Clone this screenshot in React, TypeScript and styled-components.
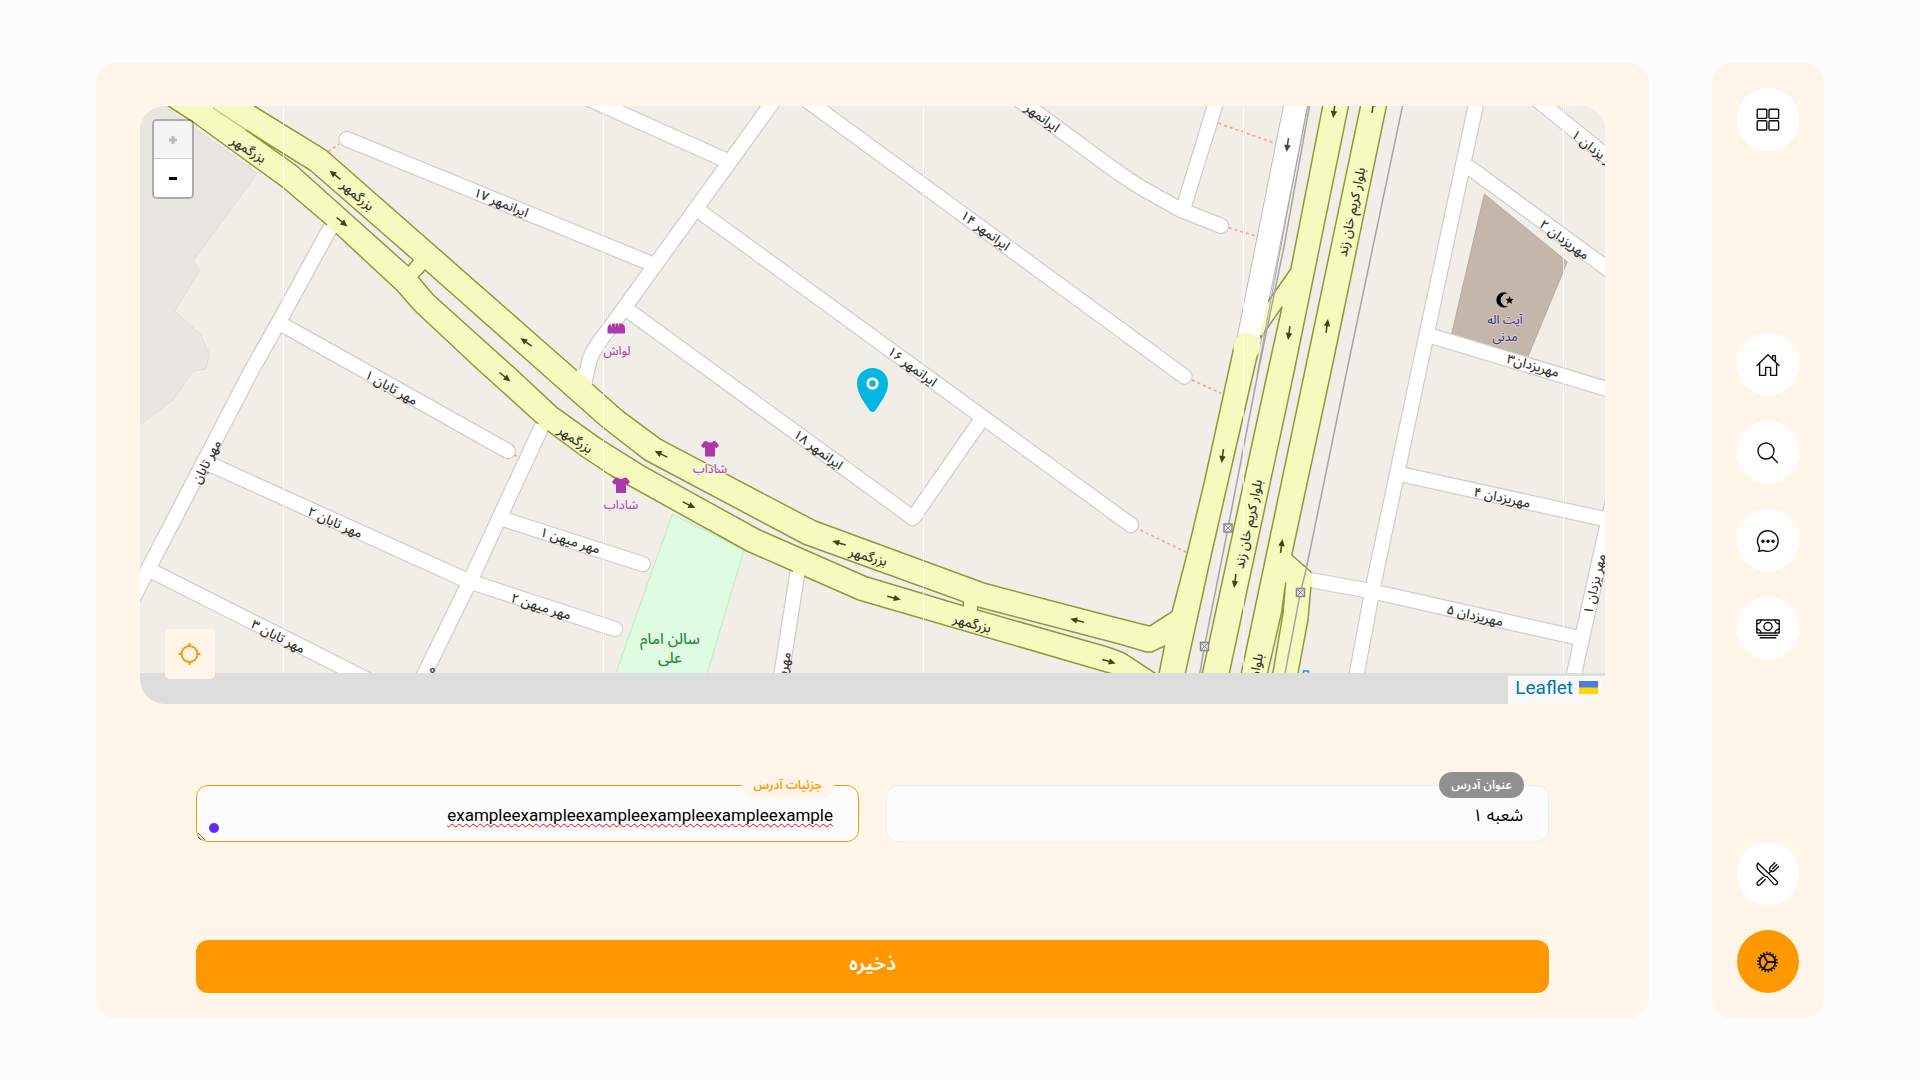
import React from "react";
import styled, { createGlobalStyle } from "styled-components";

const FONT = 'Roboto, "Noto Sans Arabic", "Noto Sans", "DejaVu Sans", sans-serif';
const MAP_FONT = '"Noto Sans Arabic", "Noto Sans", "DejaVu Sans", sans-serif';
const CREAM = "#fff5e8";
const ORANGE = "#ff9800";

const GlobalStyle = createGlobalStyle`
  * { box-sizing: border-box; }
  body { margin: 0; background: #fcfcfc; font-family: ${FONT}; color: #000; }
  button, input, textarea { font-family: inherit; }
`;

const Page = styled.div`
  direction: rtl;
  display: flex;
  gap: 63px;
  min-height: 100vh;
  padding: 63px 5% 62px;
`;

const Sidebar = styled.nav`
  flex: none;
  display: flex;
  flex-direction: column;
  justify-content: space-between;
  padding: 25px;
  border-radius: 20px;
  background: ${CREAM};
`;

const NavGroup = styled.div`
  display: flex;
  flex-direction: column;
  gap: 25px;
`;

const NavLink = styled.a<{ $active?: boolean }>`
  display: flex;
  align-items: center;
  justify-content: center;
  width: 62px;
  height: 63px;
  border-radius: 50%;
  color: #111;
  background: ${(p) => (p.$active ? ORANGE : "#fff")};
`;

const Panel = styled.main`
  flex: 1;
  min-width: 0;
  display: flex;
  flex-direction: column;
  padding: 43px 44px 25px;
  border-radius: 20px;
  background: ${CREAM};
`;

const MapBox = styled.section`
  position: relative;
  direction: ltr;
  flex: 1;
  overflow: hidden;
  border-radius: 25px;
  background: #ddd;
`;

const MapSvg = styled.svg`
  display: block;
  width: 100%;
  height: auto;
`;

const ZoomControl = styled.div`
  position: absolute;
  top: 13px;
  left: 12px;
  display: flex;
  flex-direction: column;
  width: 42px;
  border: 2px solid rgba(0, 0, 0, 0.25);
  border-radius: 5px;
  background-clip: padding-box;
  overflow: hidden;
`;

const ZoomButton = styled.button`
  height: 38px;
  padding: 0;
  border: 0;
  background: #fff;
  color: #000;
  &:disabled {
    background: #f4f4f4;
    color: #bbb;
    box-shadow: inset 0 -1px #ccc;
  }
`;

const ZoomGlyph = styled.svg`
  display: block;
  margin: auto;
`;

const LocateButton = styled.button`
  position: absolute;
  left: 25px;
  bottom: 25px;
  display: flex;
  align-items: center;
  justify-content: center;
  width: 50px;
  height: 50px;
  padding: 0;
  border: 0;
  border-radius: 5px;
  background: ${CREAM};
  color: ${ORANGE};
`;

const Attribution = styled.div`
  position: absolute;
  right: 0;
  bottom: 0;
  display: flex;
  padding: 0 7px;
  height: 28px;
  background: rgba(255, 255, 255, 0.8);
  font-size: 19px;
  line-height: 24px;
`;

const AttributionLink = styled.a`
  display: flex;
  flex-direction: row;
  gap: 6px;
  color: #0078a8;
  text-decoration: none;
`;

const Flag = styled.svg`
  margin-top: 5px;
`;

const Form = styled.form`
  display: flex;
  flex-direction: column;
  gap: 98px;
  padding: 81px 56px 0;
`;

const Fields = styled.div`
  display: grid;
  grid-template-columns: 1fr 1fr;
  gap: 27px;
`;

const Field = styled.div`
  position: relative;
  display: flex;
  height: 57px;
`;

const FieldLabel = styled.label<{ $focused?: boolean }>`
  position: absolute;
  top: -13px;
  right: 25px;
  padding: 0 12px;
  border-radius: 14px;
  background: ${(p) => (p.$focused ? CREAM : "#909090")};
  color: ${(p) => (p.$focused ? ORANGE : "#fff")};
  font-size: 12px;
  font-weight: 600;
  line-height: 26px;
`;

const TextInput = styled.input`
  width: 100%;
  padding: 4px 25px 0;
  border: 1px solid #eee;
  border-radius: 12px;
  outline: 0;
  background: #fcfcfc;
  font-size: 17px;
`;

const TextArea = styled.textarea`
  width: 100%;
  height: 57px;
  padding: 17px 25px 0;
  border: 1px solid ${ORANGE};
  border-radius: 12px;
  outline: 0;
  background: #fcfcfc;
  font-size: 17px;
  line-height: 24px;
  text-decoration: underline wavy #f00 1px;
  text-underline-offset: 2px;
  text-decoration-skip-ink: none;
  resize: vertical;
`;

const Dot = styled.span`
  position: absolute;
  left: 13px;
  bottom: 9px;
  width: 10px;
  height: 10px;
  border-radius: 50%;
  background: #6029ff;
`;

const SaveButton = styled.button`
  height: 53px;
  padding: 0 0 5px;
  border: 0;
  border-radius: 12px;
  background: ${ORANGE};
  color: #fff;
  font-size: 20px;
  font-weight: 600;
`;

/* ---------- icons ---------- */

const Icon = ({ children, width = 1.4 }: { children: React.ReactNode; width?: number }) => (
  <svg width="24" height="24" viewBox="0 0 24 24" fill="none" stroke="currentColor"
    strokeWidth={width} strokeLinecap="round" strokeLinejoin="round" aria-hidden="true">
    {children}
  </svg>
);

const GridIcon = () => (
  <Icon>
    <rect x="1.2" y="1.2" width="9.6" height="9.2" rx="1" />
    <rect x="13" y="1.2" width="9.6" height="9.2" rx="1" />
    <rect x="1.2" y="12.8" width="9.6" height="9.2" rx="1" />
    <rect x="13" y="12.8" width="9.6" height="9.2" rx="1" />
  </Icon>
);

const HomeIcon = () => (
  <Icon>
    <path d="M1 12.6 12 1.8l11 10.8M3.6 10.4v12h6v-8h5v8h6v-12M16.6 6V2.6h2.8v6" />
  </Icon>
);

const SearchIcon = () => (
  <Icon>
    <circle cx="10" cy="10" r="8" />
    <path d="m15.800 15.800 5.700 5.600" />
  </Icon>
);

const ChatIcon = () => (
  <Icon>
    <path d="M2.5 22.3c1.4-1.6 1.2-3.4.4-5.1A10.3 10.3 0 1 1 8 21.6c-1.7-.3-3.6.2-5.5.7Z" />
    <g fill="currentColor" stroke="none">
      <circle cx="7" cy="12.3" r="1.7" />
      <circle cx="12" cy="12.3" r="1.7" />
      <circle cx="17" cy="12.3" r="1.7" />
    </g>
  </Icon>
);

const MoneyIcon = () => (
  <Icon>
    <rect x=".8" y="3" width="22.4" height="13" rx=".5" />
    <circle cx="12" cy="9.5" r="4" />
    <path d="M5 3c0 2.2-2 3.8-4.2 3.8M19 3c0 2.2 2 3.8 4.2 3.8M5 16c0-2.2-2-3.8-4.2-3.8M19 16c0-2.2 2-3.8 4.2-3.8M2.4 18.4h19.2M4.2 20.8h15.6" />
  </Icon>
);

const UtensilsIcon = () => (
  <Icon>
    <path d="M1.800 1C.4 3.500 1 6.600 3.300 8.800l5.600 5.200c.8.700 1.700.2 2.400.9l6.200 7c1.200 1.300 2.700.9 3.400.200s.9-2.100-.2-3.200Z" />
    <path d="M7 15.200 1.800 19.800c-1.200 1-.9 2.200-.3 2.900s1.800.9 2.700-.2l5-5.100M13.600 10.400l2-2" />
    <path d="M18.800.8l-4 4c-1.300 1.400-1.400 3.300-.5 4.200s2.900.8 4.200-.5l4-4M20.800 2.500l-4.200 4.200" />
  </Icon>
);

const GearIcon = () => (
  <Icon width={1.8}>
    <circle cx="11.500" cy="12" r="7.800" />
    <circle cx="11.500" cy="12" r="9.400" strokeDasharray="1.400 1.881" strokeWidth="2" strokeLinecap="butt" />
    <path d="M11.500 12h7.800M11.500 12 7.500 5.300M11.500 12l-4 6.700" />
  </Icon>
);

const LocateIcon = () => (
  <Icon width={2}>
    <circle cx="11.500" cy="12" r="8" />
    <path d="M11.500 1.800V4M11.500 20v2.200M1.300 12H3.500M19.500 12h2.200" />
  </Icon>
);

/* ---------- map data ---------- */

const STREETS = [
  "M346.700 139 652 264",
  "M560 86 723 159",
  "M778 95 609 329Q592 350 589 362L584 385",
  "M702 213 1131 525",
  "M631 312.500 913 518 981 420",
  "M790 88 1184.500 376.500",
  "M1003 88 1120 174 1140 187 1181 210 1221 225.700",
  "M1184 206 1218 96",
  "M330 228.500 281 318 251.700 370 130 604",
  "M283 325 507.700 451",
  "M211.700 465 468 581 615 629",
  "M153 571.700 374 683",
  "M541.700 426.700 471 579 420 683",
  "M503 519 642.700 564",
  "M797.700 571 780 683",
  "M1478 95 1419 370 1373.400 585 1355 683",
  "M1470 168 1620 278",
  "M1530 94 1620 167",
  "M1433.700 336.700 1620 393",
  "M1404.400 475 1604 519",
  "M1310 580 1373 591.500 1575 637",
  "M1572 683 1608 522 1622 462",
];

const MAIN_ROAD =
  "M150 94 168.300 106 193 122 283.300 187.700 325 223.300 396.700 290 415 310.700 478.300 370 536.700 422.700 580 455 610 475 746.700 551 791.700 570.700 858.300 600 1147 684" +
  "L1183 684 1212 552 1228.500 480 1254 370 1259 349A12.500 12.500 0 0 0 1234.500 344L1204.700 480 1187.500 552 1172 611.700 1149.600 626 1110 616 985 583.300 815 520.700 660.700 439.300 623.300 411.700 578.300 371.700 326.700 150.700 235 94Z";

const MEDIANS = [
  "M246 130 263 141 310 170 413.300 260 408.300 266 296.700 166Z",
  "M425 270 538 370 600 425 645 460 803.300 544 963.300 601.700V605.700L866.700 576.700 760 530 645 466.700 600 438.300 556.700 407.300 516.700 370 433.300 295 418.300 277.300Z",
  "M977.700 607 1120 644.300 1146 652 1152 652 1164.400 646 1157 684H1147L1154.800 673 1123.800 652.700 1108 647 977.700 610Z",
];

const PATHS = [
  "M328.300 151.700 339.300 144",
  "M1218.500 123.300 1275.300 143.300",
  "M1228.800 227.700 1258 236.700",
  "M1192 380 1221 393.300",
  "M1140.300 530 1186.400 552.300",
  "M514 455 520 457.700",
];

const JUNCTIONS = [
  "M327 225 336 233",
  "M538 424 547 431",
  "M577 370.500 592 384",
  "M793 571 804 576",
];

/* x, y, angle, text */
const STREET_NAMES: [number, number, number, string][] = [
  [248, 150, 32, "بزرگمهر"],
  [357, 196, 40, "بزرگمهر"],
  [575, 440, 34, "بزرگمهر"],
  [868, 557, 16, "بزرگمهر"],
  [972, 624, 15, "بزرگمهر"],
  [501, 203, 22, "ایرانمهر ۱۷"],
  [1042, 118, 36, "ایرانمهر"],
  [985, 231, 36, "ایرانمهر ۱۴"],
  [912, 367, 36, "ایرانمهر ۱۶"],
  [818, 450, 36, "ایرانمهر ۱۸"],
  [391, 388, 29, "مهر تابان ۱"],
  [335, 523, 24, "مهر تابان ۲"],
  [278, 637, 27, "مهر تابان ۳"],
  [207, 462, -62, "مهر تابان"],
  [570, 541, 17, "مهر میهن ۱"],
  [541, 607, 17, "مهر میهن ۲"],
  [783, 675, -80, "مهریزدان"],
  [421, 690, -64, "مهر میهن"],
  [1352, 212, -78, "بلوار کریم خان زند"],
  [1249, 524, -78, "بلوار کریم خان زند"],
  [1250, 698, -78, "بلوار کریم خان زند"],
  [1597, 152, 38, "مهر یزدان ۱"],
  [1564, 240, 36, "مهریزدان ۲"],
  [1533, 366, 16, "مهریزدان۳"],
  [1502, 498, 12, "مهریزدان ۴"],
  [1475, 616, 13, "مهریزدان ۵"],
  [1595, 584, -77, "مهر یزدان ۱"],
];

/* x, y, angle, colour */
const ARROWS: [number, number, number, string][] = [
  [335, 175, 218, "#3c4708"],
  [342, 222, 40, "#3c4708"],
  [526, 342, 215, "#3c4708"],
  [505, 377, 40, "#3c4708"],
  [661, 454, 206, "#3c4708"],
  [689, 505, 26, "#3c4708"],
  [839, 543, 196, "#3c4708"],
  [894, 598, 15, "#3c4708"],
  [1077, 620.5, 194, "#3c4708"],
  [1109, 661.5, 17, "#3c4708"],
  [1287.5, 145, 98, "#444"],
  [1334, 111, 98, "#3c4708"],
  [1373, 106, -82, "#3c4708"],
  [1289, 333, 98, "#3c4708"],
  [1327, 326, -82, "#3c4708"],
  [1222.5, 456, 98, "#3c4708"],
  [1281.5, 546, -82, "#3c4708"],
  [1235, 581, 98, "#3c4708"],
];

const SEAMS = [283, 603, 923, 1243, 1563];
const CROSSINGS: [number, number][] = [[1228, 528], [1300.5, 592.5], [1204.5, 646.5]];

const MapText = styled.text<{ $size?: number; $halo?: string }>`
  direction: rtl;
  font-family: ${MAP_FONT};
  font-size: ${(p) => p.$size ?? 13}px;
  font-weight: 500;
  text-anchor: middle;
  dominant-baseline: central;
  paint-order: stroke;
  stroke: ${(p) => p.$halo ?? "none"};
  stroke-width: 2px;
  stroke-linejoin: round;
`;

const Shirt = ({ x, y }: { x: number; y: number }) => (
  <path transform={`translate(${x - 9} ${y - 7.5})`} fill="#ac39ac"
    d="M5.500 0Q9 3 12.500 0L15 .5 18 4.500 15.500 7.200 14 6.200V15.500H4V6.200L2.500 7.200 0 4.500 3 .5Z" />
);

const CityMap = () => (
  <MapSvg viewBox="140 106 1465 567" role="img" aria-label="نقشه">
    <rect x="140" y="106" width="1465" height="567" fill="#f1eee8" />
    <path d="M130 96H150L257 173.300 193 261 200 270 174.500 311 200 334 209.500 354 206 369 193 371 173 400 130 432Z" fill="#e7e6e1" stroke="#e2dccd" />
    <path d="M672.300 514.300 744 550 704 684H612Z" fill="#dffce2" stroke="#b9efbc" />
    <path d="M1484.300 194 1567.300 261.700 1527.400 358 1451.600 334Z" fill="#c5b6ab" stroke="#b5a095" strokeWidth=".8" />
    <g fill="none" strokeLinecap="round" strokeLinejoin="round">
      <g stroke="#cfcecb" strokeWidth="16.500">{STREETS.map((d) => <path key={d} d={d} />)}</g>
      <path d="M1298 94 1247 349" stroke="#bbb" strokeWidth="25" />
      <g stroke="#fff" strokeWidth="14">{STREETS.map((d) => <path key={d} d={d} />)}</g>
      <path d="M1298 94 1247 349" stroke="#fff" strokeWidth="23" />
      <g stroke="#fa9c92" strokeWidth="1.500" strokeDasharray="3 3" strokeLinecap="butt">
        {PATHS.map((d) => <path key={d} d={d} />)}
      </g>
    </g>
    <g fill="#f6fabf" stroke="#8f993a" strokeWidth="1.500" strokeLinejoin="round">
      <path d="M1325 94 1290.800 269 1269 300 1260.500 338 1282 307 1268 370 1200 684H1227L1294.500 370 1351 94Z" />
      <path d="M1363 94 1305 370 1239 684H1265L1281.500 613 1285.600 583 1283 613 1271 684H1296L1308 620 1310.800 588V571.700L1291.800 555 1331.500 370 1389 94Z" />
      <path d={MAIN_ROAD} />
    </g>
    <circle cx="1246.800" cy="346.500" r="13.500" fill="#f6fabf" />
    <path d="M1269 302 1261.500 335M1310.800 573V587" stroke="#f6fabf" strokeWidth="3" />
    <path d="M213 108 263 141" stroke="#c3ca79" strokeWidth="1.300" />
    <g fill="#f1eee8" stroke="#8f993a" strokeWidth="1.500">
      {MEDIANS.map((d) => <path key={d} d={d} />)}
    </g>
    <g stroke="#f8fbd0" strokeWidth="3">{JUNCTIONS.map((d) => <path key={d} d={d} />)}</g>
    <g fill="none" stroke="#a5a5a5" strokeWidth="1.500">
      <path d="M1402.500 106 1347 370 1306 570 1300.400 592.700 1283 684" />
      <path d="M1309.500 106 1284 246.700 1258.500 370 1228 528 1204.400 646.700 1198 684" />
      <path d="M1307.500 106 1282 240 1257 375" strokeWidth="1" />
      {CROSSINGS.map(([x, y]) => (
        <g key={x} stroke="#888">
          <rect x={x - 4} y={y - 4} width="8" height="8" fill="#e4e4e4" />
          <path d={`M${x - 3} ${y - 3}l6 6m0-6l-6 6`} strokeWidth="1" />
        </g>
      ))}
    </g>
    {SEAMS.map((x) => <rect key={x} x={x} y="106" width="1" height="567" fill="#fff" opacity=".8" />)}
    {ARROWS.map(([x, y, a, c]) => (
      <g key={`${x}-${y}`} transform={`translate(${x} ${y}) rotate(${a})`}>
        <path d="M-7 0H2" stroke={c} strokeWidth="1.500" />
        <path d="M0-3.200 7 0 0 3.200Z" fill={c} />
      </g>
    ))}
    {STREET_NAMES.map(([x, y, a, t]) => (
      <MapText key={`${x}-${y}`} transform={`translate(${x} ${y}) rotate(${a})`} fill="#33332f">{t}</MapText>
    ))}
    <path d="M607.500 333.500v-5q0-3.500 3-4.500l1.500 4-.2-4.500h2.800l1 4.500-.2-4.500h2.800l1 4.500-.2-4.500h2.500q3.500 1 3.500 5v5Z" fill="#ac39ac" />
    <Shirt x={710} y={448.5} />
    <Shirt x={621} y={485} />
    <MapText x="617" y="351" $size={12} fill="#b04fb3" $halo="#f6f3ef">لواش</MapText>
    <MapText x="710" y="469" $size={12} fill="#b04fb3" $halo="#f6f3ef">شاداب</MapText>
    <MapText x="621" y="505" $size={12} fill="#b04fb3" $halo="#f6f3ef">شاداب</MapText>
    <MapText x="670" y="639" $size={15} fill="#34873e">سالن امام</MapText>
    <MapText x="670" y="658" $size={15} fill="#34873e">علی</MapText>
    <path d="M1508.500 293.800A7.600 7.600 0 1 0 1508.500 306 6.300 6.300 0 1 1 1508.500 293.800Z" fill="#000" />
    <path d="m1509.500 296 1.200 2.700 2.900.3-2.200 1.900.7 2.900-2.600-1.500-2.500 1.500.7-2.900-2.200-1.900 2.900-.3Z" fill="#000" />
    <MapText x="1505" y="320" $size={12} fill="#433f84" $halo="#d9cfc8">آیت اله</MapText>
    <MapText x="1505" y="337" $size={12} fill="#433f84" $halo="#d9cfc8">مدنی</MapText>
    <path d="M1303.500 673v-2h5v2" fill="none" stroke="#1d9ad6" strokeWidth="1.500" />
    <path fill="#00b7e3"
      d="M872.500 412Q870 412 868 408C862 399 857 391.500 857 383.500A15.500 15.500 0 0 1 888 383.500C888 391.500 883 399 877 408Q875 412 872.500 412Z" />
    <circle cx="872.500" cy="383.500" r="4.700" fill="#00b7e3" stroke="#f1eee8" strokeWidth="3" />
  </MapSvg>
);

export default function App() {
  return (
    <>
      <GlobalStyle />
      <Page lang="fa">
        <Sidebar aria-label="منو">
          <NavGroup>
            <NavLink href="#dashboard" aria-label="داشبورد"><GridIcon /></NavLink>
          </NavGroup>
          <NavGroup>
            <NavLink href="#home" aria-label="خانه"><HomeIcon /></NavLink>
            <NavLink href="#search" aria-label="جستجو"><SearchIcon /></NavLink>
            <NavLink href="#chat" aria-label="گفتگو"><ChatIcon /></NavLink>
            <NavLink href="#payments" aria-label="پرداخت"><MoneyIcon /></NavLink>
          </NavGroup>
          <NavGroup>
            <NavLink href="#menu" aria-label="غذا"><UtensilsIcon /></NavLink>
            <NavLink href="#settings" aria-label="تنظیمات" $active><GearIcon /></NavLink>
          </NavGroup>
        </Sidebar>
        <Panel>
          <MapBox>
            <CityMap />
            <ZoomControl>
              <ZoomButton type="button" disabled aria-label="بزرگ‌نمایی">
                <ZoomGlyph width="8" height="8" viewBox="0 0 8 8" aria-hidden="true">
                  <path d="M4 0v8M0 4h8" stroke="currentColor" strokeWidth="3" />
                </ZoomGlyph>
              </ZoomButton>
              <ZoomButton type="button" aria-label="کوچک‌نمایی">
                <ZoomGlyph width="8" height="3" viewBox="0 0 8 3" aria-hidden="true">
                  <path d="M0 1.500h8" stroke="currentColor" strokeWidth="3" />
                </ZoomGlyph>
              </ZoomButton>
            </ZoomControl>
            <LocateButton type="button" aria-label="موقعیت من"><LocateIcon /></LocateButton>
            <Attribution>
              <AttributionLink href="#leaflet">
                Leaflet
                <Flag width="19" height="13" viewBox="0 0 19 13" aria-hidden="true">
                  <rect width="19" height="7" fill="#4c7be1" />
                  <rect y="6.500" width="19" height="6.500" fill="#ffd500" />
                </Flag>
              </AttributionLink>
            </Attribution>
          </MapBox>
          <Form onSubmit={(e) => e.preventDefault()}>
            <Fields>
              <Field>
                <TextInput id="title" defaultValue="شعبه ۱" />
                <FieldLabel htmlFor="title">عنوان آدرس</FieldLabel>
              </Field>
              <Field>
                <TextArea id="details" spellCheck={false} defaultValue="exampleexampleexampleexampleexampleexample" />
                <FieldLabel htmlFor="details" $focused>جزئیات آدرس</FieldLabel>
                <Dot />
              </Field>
            </Fields>
            <SaveButton type="submit">ذخیره</SaveButton>
          </Form>
        </Panel>
      </Page>
    </>
  );
}
